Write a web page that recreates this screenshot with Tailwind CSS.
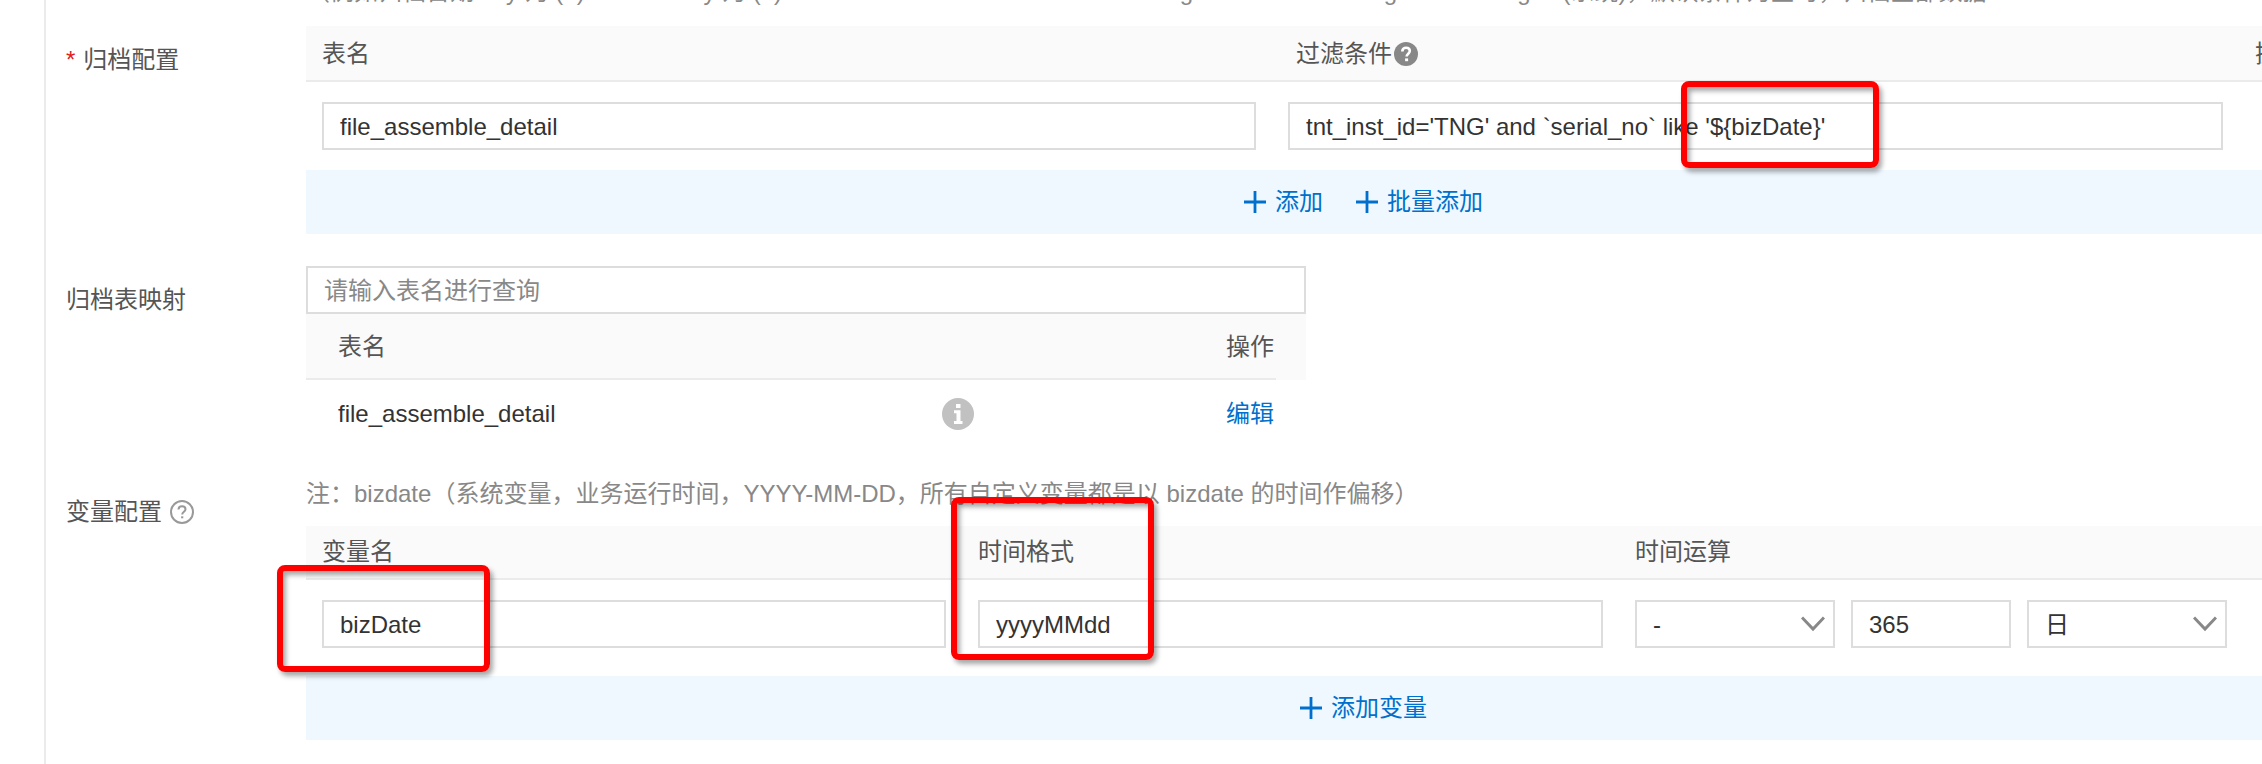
<!DOCTYPE html>
<html lang="zh-CN">
<head>
    <meta charset="UTF-8">
    <meta name="viewport" content="width=device-width, initial-scale=1.0">
    <title>归档配置</title>
    <script src="https://cdn.jsdelivr.net/npm/@tailwindcss/browser@4"></script>
    <style>
        body { font-family: "Liberation Sans", "Noto Sans CJK SC", sans-serif; }
    </style>
</head>
<body class="bg-white text-2xl text-[#333] overflow-x-hidden">

<main class="ml-11 border-l-2 border-[#ebebeb] pl-5 min-h-screen overflow-hidden">

    <!-- hint above the first table -->
    <div class="h-[26px] pl-60 overflow-hidden flex items-end text-[#888]">
        <p class="mb-[18px] leading-8 whitespace-nowrap">（例如归档日期 key 为 (1) created key 为 (2) and the value of tenant is a new string or the first warning or the string id (系统)，默认条件为空时，归档全部数据</p>
    </div>

    <!-- archive config -->
    <section class="flex">
        <h2 class="w-60 shrink-0 pt-4 leading-9 text-[#555]"><span class="text-[#e02020] mr-2">*</span>归档配置</h2>
        <div class="grow -mr-[158px]">
            <div class="grid grid-cols-[966fr_967fr_181fr] h-14 bg-[#fafafa] border-b-2 border-[#ebebeb] text-[#555] leading-9 pt-[10px]">
                <div class="px-4">表名</div>
                <div class="pl-6 flex items-start">
                    过滤条件
                    <svg class="size-6 mt-[6px] ml-[2px]" viewBox="0 0 24 24"><circle cx="12" cy="12" r="12" fill="#888"/><path d="M8.3 9.4C8.3 7.2 9.9 5.7 12.1 5.7S15.8 7.1 15.8 9C15.8 11.6 12.6 11.8 12.6 14.6" fill="none" stroke="#fff" stroke-width="2.6"/><rect x="11.1" y="16.4" width="3" height="2.8" fill="#fff"/></svg>
                </div>
                <div class="px-4">操作</div>
            </div>
            <div class="grid grid-cols-[966fr_967fr_181fr] py-5">
                <div class="px-4">
                    <input type="text" aria-label="表名" value="file_assemble_detail" class="block w-full h-12 border-2 border-[#ddd] px-4 pt-[2px]">
                </div>
                <div class="px-4">
                    <div class="relative">
                        <input type="text" aria-label="过滤条件" value="tnt_inst_id='TNG' and `serial_no` like '${bizDate}'" class="block w-full h-12 border-2 border-[#ddd] px-4 pt-[2px]">
                        <div class="absolute left-[393px] -top-[21px] w-[198px] h-[87px] border-6 border-[#f00] rounded-lg shadow-[3px_4px_5px_rgba(0,0,0,0.35)] inset-shadow-[3px_4px_5px_rgba(0,0,0,0.35)] pointer-events-none"></div>
                    </div>
                </div>
            </div>
            <div class="h-16 bg-[#eff7ff] flex items-center justify-center gap-8 text-[#0070cc]">
                <button class="flex items-center gap-2 leading-8"><svg class="size-6" viewBox="0 0 24 24" stroke="currentColor" stroke-width="2.800"><path d="M1 12H23M12 1V23"/></svg>添加</button>
                <button class="flex items-center gap-2 leading-8"><svg class="size-6" viewBox="0 0 24 24" stroke="currentColor" stroke-width="2.800"><path d="M1 12H23M12 1V23"/></svg>批量添加</button>
            </div>
        </div>
    </section>

    <!-- table mapping -->
    <section class="flex pt-8">
        <label for="query" class="w-60 shrink-0 pt-4 leading-9 text-[#555]">归档表映射</label>
        <div class="w-[1000px]">
            <input id="query" type="text" placeholder="请输入表名进行查询" class="block w-full h-12 border-2 border-[#ddd] px-4 pt-[2px] placeholder:text-[#888]">
            <div class="bg-[#fafafa] pr-[30px]">
                <div class="flex items-center justify-between h-[66px] border-b-2 border-[#ebebeb] pt-[2px] pl-8 pr-[2px] text-[#555]">
                    <span>表名</span>
                    <span>操作</span>
                </div>
            </div>
            <div class="grid grid-cols-[604px_1fr_auto] items-center h-[68px] pl-8 pr-8">
                <span>file_assemble_detail</span>
                <svg class="size-8" viewBox="0 0 32 32"><circle cx="16" cy="16" r="16" fill="#c1c1c1"/><path d="M14 6h4.500v4H14zM12 12.200h6.500V23H20.500v3H12v-3h2.500v-7.800H12z" fill="#fff"/></svg>
                <a href="#" class="text-[#0070cc]">编辑</a>
            </div>
        </div>
    </section>

    <!-- variable config -->
    <section class="flex pt-[30px]">
        <h2 class="w-60 shrink-0 pt-4 leading-9 text-[#555] flex items-start gap-2">
            变量配置
            <svg class="size-6 mt-[6px]" viewBox="0 0 24 24" fill="none" stroke="#999" stroke-width="2"><circle cx="12" cy="12" r="11"/><path d="M8.500 9.500C8.500 7.500 10 6.200 12 6.200S15.500 7.500 15.500 9.300C15.500 11.700 12.200 11.800 12.200 14.500"/><path d="M11.100 17.300h2.200"/></svg>
        </h2>
        <div class="grow -mr-[158px]">
            <p class="leading-8 mb-4 text-[#888]">注：bizdate（系统变量，业务运行时间，YYYY-MM-DD，所有自定义变量都是以 bizdate 的时间作偏移）</p>
            <div class="grid grid-cols-[656fr_657fr_801fr] h-[54px] bg-[#fafafa] border-b-2 border-[#ebebeb] text-[#555] leading-8 pt-[10px]">
                <div class="px-4">变量名</div>
                <div class="px-4">时间格式</div>
                <div class="px-4">时间运算</div>
            </div>
            <div class="grid grid-cols-[656fr_657fr_801fr] pt-5 pb-7">
                <div class="px-4">
                    <div class="relative">
                        <input type="text" aria-label="变量名" value="bizDate" class="block w-full h-12 border-2 border-[#ddd] px-4 pt-[2px]">
                        <div class="absolute -left-[45px] -top-[35px] w-[213px] h-[107px] border-6 border-[#f00] rounded-lg shadow-[3px_4px_5px_rgba(0,0,0,0.35)] inset-shadow-[3px_4px_5px_rgba(0,0,0,0.35)] pointer-events-none"></div>
                    </div>
                </div>
                <div class="px-4">
                    <div class="relative">
                        <input type="text" aria-label="时间格式" value="yyyyMMdd" class="block w-full h-12 border-2 border-[#ddd] px-4 pt-[2px]">
                        <div class="absolute -left-[27px] -top-[103px] w-[203px] h-[163px] border-6 border-[#f00] rounded-lg shadow-[3px_4px_5px_rgba(0,0,0,0.35)] inset-shadow-[3px_4px_5px_rgba(0,0,0,0.35)] pointer-events-none"></div>
                    </div>
                </div>
                <div class="px-4 flex gap-4">
                    <div class="relative w-[200px]">
                        <select aria-label="运算符" class="block appearance-none w-full h-12 border-2 border-[#ddd] px-4 pt-[2px]"><option>-</option><option>+</option></select>
                        <svg class="absolute right-[10px] top-3 size-6 pointer-events-none" viewBox="0 0 24 24" fill="none" stroke="#888" stroke-width="3"><path d="M1 5.500L12 17L23 5.500"/></svg>
                    </div>
                    <input type="text" aria-label="偏移量" value="365" class="block w-40 h-12 border-2 border-[#ddd] px-4 pt-[2px]">
                    <div class="relative w-[200px]">
                        <select aria-label="单位" class="block appearance-none w-full h-12 border-2 border-[#ddd] px-4 pt-[2px]"><option>日</option><option>月</option></select>
                        <svg class="absolute right-[10px] top-3 size-6 pointer-events-none" viewBox="0 0 24 24" fill="none" stroke="#888" stroke-width="3"><path d="M1 5.500L12 17L23 5.500"/></svg>
                    </div>
                </div>
            </div>
            <div class="h-16 bg-[#eff7ff] flex items-center justify-center text-[#0070cc]">
                <button class="flex items-center gap-2 leading-8"><svg class="size-6" viewBox="0 0 24 24" stroke="currentColor" stroke-width="2.800"><path d="M1 12H23M12 1V23"/></svg>添加变量</button>
            </div>
        </div>
    </section>

</main>

</body>
</html>
